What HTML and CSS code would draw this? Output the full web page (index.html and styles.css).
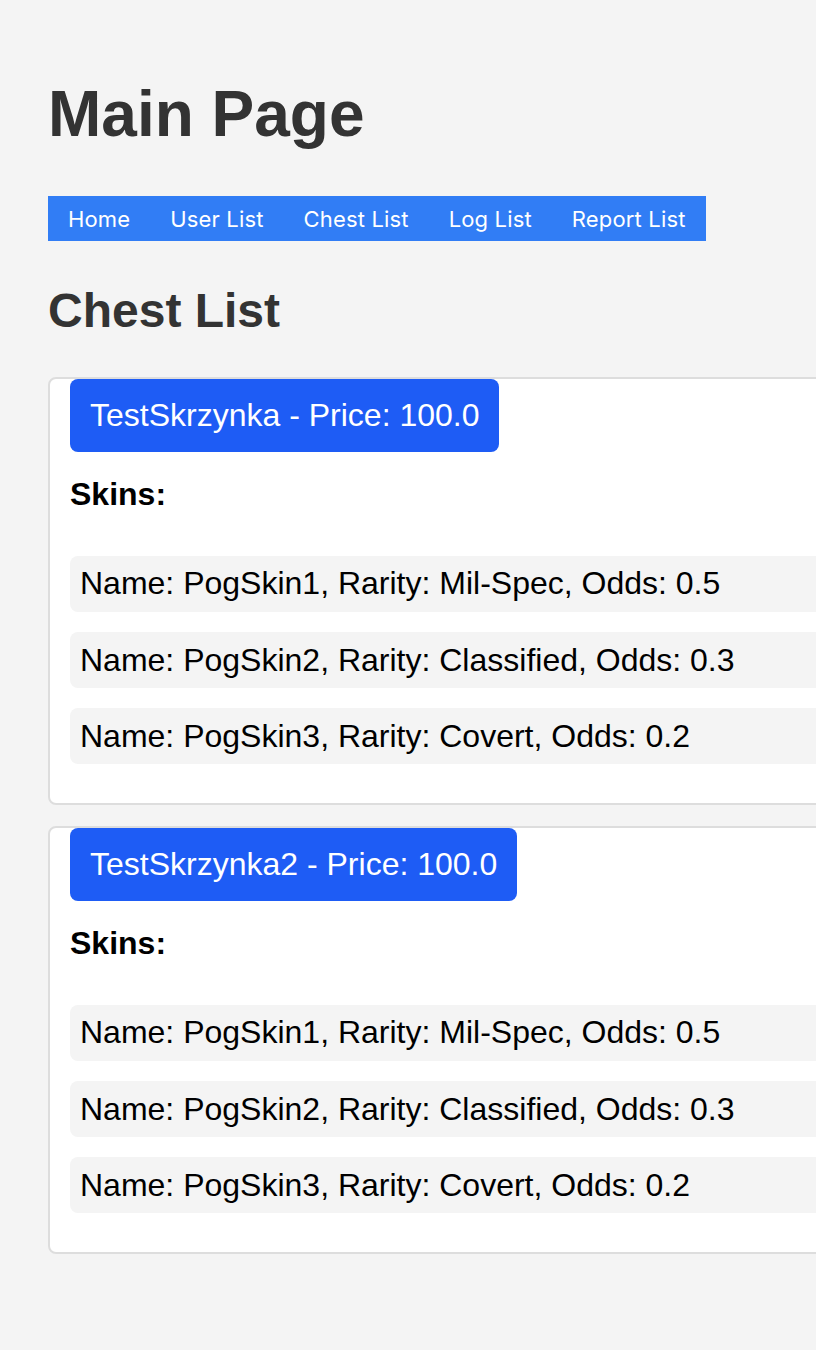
FILE: index.html
```html
<!DOCTYPE html>
<html>
<head>
<meta charset="utf-8">
<link rel="stylesheet" href="styles.css">
</head>
<body>
<div class="page">
  <h1 class="title">Main Page</h1>
  <nav class="nav">
    <a class="nav-link" href="#">Home</a>
    <a class="nav-link" href="#">User List</a>
    <a class="nav-link" href="#">Chest List</a>
    <a class="nav-link" href="#">Log List</a>
    <a class="nav-link" href="#">Report List</a>
  </nav>
  <h2 class="subtitle">Chest List</h2>
  <div class="chest">
    <button class="chest-btn">TestSkrzynka - Price: 100.0</button>
    <div class="skins-label">Skins:</div>
    <ul class="skins">
      <li class="skin">Name: PogSkin1, Rarity: Mil-Spec, Odds: 0.5</li>
      <li class="skin">Name: PogSkin2, Rarity: Classified, Odds: 0.3</li>
      <li class="skin">Name: PogSkin3, Rarity: Covert, Odds: 0.2</li>
    </ul>
  </div>
  <div class="chest">
    <button class="chest-btn">TestSkrzynka2 - Price: 100.0</button>
    <div class="skins-label">Skins:</div>
    <ul class="skins">
      <li class="skin">Name: PogSkin1, Rarity: Mil-Spec, Odds: 0.5</li>
      <li class="skin">Name: PogSkin2, Rarity: Classified, Odds: 0.3</li>
      <li class="skin">Name: PogSkin3, Rarity: Covert, Odds: 0.2</li>
    </ul>
  </div>
</div>
</body>
</html>
```
FILE: styles.css
```css
html, body {
  margin: 0;
  padding: 0;
  background: #f4f4f4;
  overflow: hidden;
}
body {
  font-family: "Liberation Sans", Arial, sans-serif;
  color: #000;
}
.page {
  width: 900px;
  padding: 77px 0 0 48px;
}
.title {
  margin: 0;
  font-size: 64px;
  line-height: 74px;
  font-weight: bold;
  color: #333;
}
.nav {
  display: inline-flex;
  margin-top: 45px;
  background: #317df5;
}
.nav-link {
  font-family: Inter, "Liberation Sans", sans-serif;
  font-size: 22px;
  line-height: 25px;
  letter-spacing: 0.16px;
  padding: 11px 20px 9px;
  color: #fff;
  text-decoration: none;
}
.subtitle {
  margin: 42px 0 0;
  font-size: 48px;
  line-height: 55px;
  font-weight: bold;
  color: #333;
}
.chest {
  margin-top: 39px;
  border: 2px solid #ddd;
  border-radius: 8px;
  background: #fff;
  padding: 0 20px 39px;
}
.chest + .chest {
  margin-top: 21px;
}
.chest-btn {
  display: block;
  margin: 0;
  border: 0;
  border-radius: 8px;
  background: #1e5cf5;
  color: #fff;
  font-family: "Liberation Sans", Arial, sans-serif;
  font-size: 32px;
  line-height: 37px;
  padding: 18px 20px;
}
.skins-label {
  margin-top: 24px;
  font-size: 32px;
  line-height: 37px;
  font-weight: bold;
}
.skins {
  list-style: none;
  margin: 43px 0 0;
  padding: 0;
  display: flex;
  flex-direction: column;
  gap: 20.5px;
}
.skin {
  background: #f4f4f4;
  border-radius: 8px;
  font-size: 32px;
  line-height: 37px;
  padding: 9.35px 10px;
}
```
